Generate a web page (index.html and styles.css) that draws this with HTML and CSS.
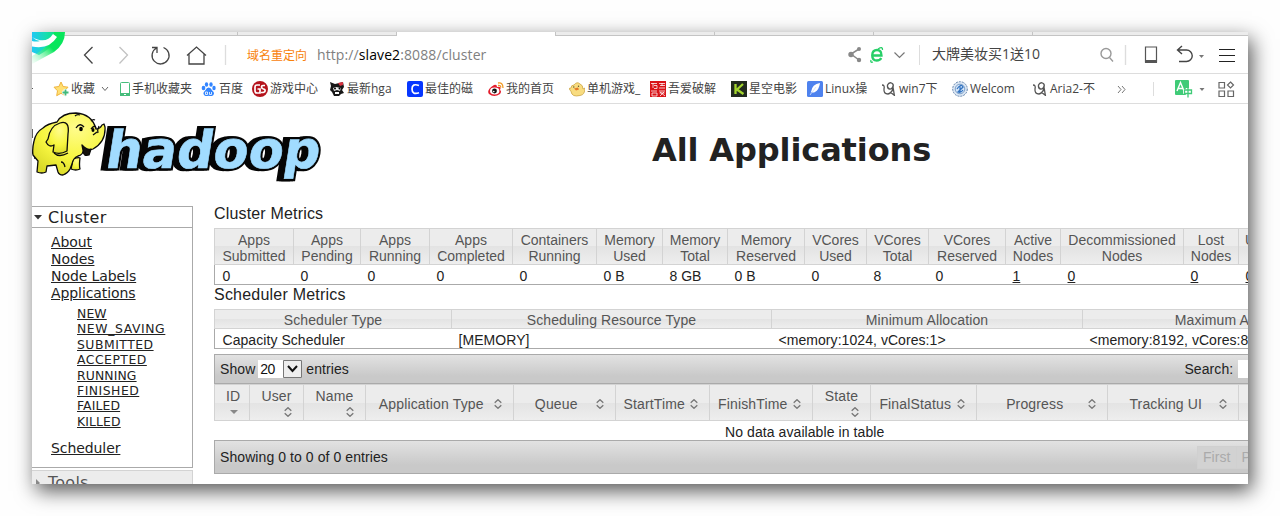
FILE: index.html
```html
<!DOCTYPE html>
<html lang="zh-CN">
<head>
<meta charset="utf-8">
<title>All Applications</title>
<link rel="stylesheet" href="styles.css">
</head>
<body>
<div class="window">
  <div class="tabs"><i></i><i></i><i class="active"></i><i></i><i></i><i></i><i></i></div>
  <svg class="brand" width="34" height="32" viewBox="0 0 34 32"><defs><linearGradient id="g1" x1="0" x2="1"><stop offset="0" stop-color="#21c8f5"/><stop offset=".5" stop-color="#18ddb0"/><stop offset="1" stop-color="#08e85e"/></linearGradient><linearGradient id="g2" x1="1" y1="0" x2="0" y2="1"><stop offset=".45" stop-color="#08e65c"/><stop offset="1" stop-color="#a8f8c8" stop-opacity=".1"/></linearGradient></defs><path d="M0 0H28Q25 13 7 23L0 20Z" fill="url(#g1)"/><path d="M22 0H33Q33 12 22 20Q11 26 0 32V24Q22 13 22 0Z" fill="url(#g2)"/><path d="M0 5Q14 13 21 2L25 5Q17 18 0 14.500V9Q4 10 8 9Q3 8 0 5Z" fill="#fff"/></svg>
  <div class="address">
    <svg class="nav" width="160" height="24" viewBox="0 0 160 24" fill="none" stroke="#444" stroke-width="1.3"><path d="M12.500 4 4.500 12l8 8.500"/><path d="M39.500 4l8 8-8 8.500" stroke="#c2c2c2"/><path d="M83.500 4.500a8.500 8.500 0 1 1-7 .5M72 4.500h5v5.500"/><path d="M107 12.500 116.500 4l9.500 8.500M109 11v10h15V11"/><path d="M145.500 2v20" stroke="#ddd"/></svg>
    <span class="redirect">域名重定向</span>
    <span class="url">http://<b>slave2</b>:8088/cluster</span>
    <svg class="page-tools" width="75" height="24" viewBox="0 0 75 24" fill="none"><path d="M13 6 5 11l8 6" stroke="#888" stroke-width="1.5"/><g fill="#888"><circle cx="13" cy="6" r="2"/><circle cx="5" cy="11.500" r="2.700"/><circle cx="13" cy="17" r="2.200"/></g><path d="M26 12.500h9.500q0-5.500-4.500-5.500t-4.800 5.200q0 5.300 4.500 5.300 3.300 0 4.500-2.500" stroke="#27cf68" stroke-width="2.300"/><path d="M25 17q-1 3 2 2m5-13q5-3 4.500 1" stroke="#27cf68" stroke-width="1.300"/><path d="m48.500 9.500 5 5 5-5" stroke="#777" stroke-width="1.200"/><path d="M73.500 2v20" stroke="#ddd"/></svg>
    <span class="query">大牌美妆买1送10</span>
    <svg class="window-tools" width="140" height="24" viewBox="0 0 140 24" fill="none" stroke="#444" stroke-width="1.400"><g stroke="#999"><circle cx="8" cy="10.500" r="5"/><path d="m11.500 14.500 3.500 4"/></g><path d="M27.500 2v20" stroke="#ddd"/><path d="M47.500 4h11v15h-11z" stroke="#555" stroke-width="1.200"/><path d="M47 17h12v3H47z" fill="#555" stroke="none"/><path d="M84 3l-4.500 4 4.500 4M80 7h8.500a5.500 5.500 0 0 1 0 11.500h-7.500"/><path d="M101 12h5l-2.500 3z" fill="#777" stroke="none"/><path d="M121 6.500h16M121 12.500h16M121 18.500h16" stroke="#222" stroke-width="1"/></svg>
  </div>
  <div class="bookmarks">
    <span class="tick"></span>
    <span class="bm"><svg viewBox="0 0 16 16"><path d="m8 1 2.100 4.500 4.900.7-3.500 3.600.8 4.900L8 12.300l-4.300 2.400.8-4.900L1 6.200l4.900-.7z" fill="#ffe073" stroke="#efb43e"/><path d="M12.500 8v7M9 11.500h7" stroke="#fff" stroke-width="3.500"/><path d="M12.500 8.500v6M9.500 11.500h6" stroke="#42b97b" stroke-width="1.800"/></svg>收藏<svg class="chev" viewBox="0 0 8 8"><path d="m1 2 3 3.500L7 2" fill="none" stroke="#666"/></svg></span>
    <span class="bm phone"><svg viewBox="0 0 12 16"><rect x="1.500" y="1.500" width="9" height="13" rx="1" fill="#fff" stroke="#46bd7c"/><path d="M1 12h10v3H1z" fill="#46bd7c"/><path d="M5 13.500h2" stroke="#fff"/></svg>手机收藏夹</span>
    <span class="bm"><svg viewBox="0 0 16 16" fill="#3385ff"><ellipse cx="2.500" cy="7" rx="1.800" ry="2.300"/><ellipse cx="5.500" cy="3.500" rx="1.700" ry="2.300"/><ellipse cx="10" cy="3.500" rx="1.700" ry="2.300"/><ellipse cx="13" cy="7" rx="1.700" ry="2.300"/><path d="M7.700 6.500q2 0 3.500 3 3 2.500 1 4.700-2 1.500-4.500.5-2.500 1-4.500-.5-2-2.200 1-4.700 1.500-3 3.500-3z"/><path d="M4.500 11h2v2.500h-2zM8.500 11v2.500h2V11" fill="none" stroke="#fff" stroke-width=".8"/></svg>百度</span>
    <span class="bm"><svg viewBox="0 0 16 16"><circle cx="8" cy="8" r="8" fill="#b5131c"/><path d="M8 4H5Q3 4 3 6v4q0 2 2 2h3V8H5.500M13 4.500h-2Q9.500 4.500 9.500 6t2 2q2 .3 1.500 2.200-.3 1.500-4 1.300" fill="none" stroke="#fff" stroke-width="1.700"/></svg>游戏中心</span>
    <span class="bm"><svg viewBox="0 0 16 16"><path d="M1 1l5 2 4-1 4-1 1 5-2 3 2 3-3 1-2 2H5l-2-4-2-2 1-4z" fill="#171717"/><path d="M4 7l3-1 5 1-1 3-3-1-3 1z" fill="#eee"/><path d="M9 2l5-1v3l-3 1z" fill="#d83240"/><circle cx="6" cy="7.500" r="1"/><circle cx="10.500" cy="7.500" r="1"/><path d="M6 12h4" stroke="#fff" stroke-width="2"/></svg>最新hga</span>
    <span class="bm"><svg viewBox="0 0 16 16"><rect width="16" height="16" rx="2" fill="#0737ff"/><path d="M12 4.500q-7-2.500-7 3.500t7 3.700" fill="none" stroke="#fff" stroke-width="1.700"/></svg>最佳的磁</span>
    <span class="bm"><svg viewBox="0 0 16 16"><path d="M6 4q3-1 3 2 5-1 3 3 2 1 0 4-6 4-11 0-3-4 5-9z" fill="#e41d2c"/><ellipse cx="6.700" cy="10" rx="4.700" ry="3.400" fill="#fff"/><circle cx="6.500" cy="10" r="2.400" fill="#111"/><circle cx="5.800" cy="10.600" r=".8" fill="#fff"/><path d="M10 2q5-1 5 5M10 4.500q3-.5 2.700 2" fill="none" stroke="#f29b24" stroke-width="1.300"/></svg>我的首页</span>
    <span class="bm"><svg viewBox="0 0 16 16"><path d="M2 7q0-3 3-3 3-4 6-1 3 1 3 5l2-1q0 7-5 7.500-8 2-9-4L0 7.500z" fill="#f8dc80" stroke="#c69e3a" stroke-width=".7"/><path d="m5 7.500 4-1 1 2-3 1z" fill="#e27a28"/><circle cx="4.800" cy="6" r=".7" fill="#553"/><circle cx="9.500" cy="5.200" r=".7" fill="#553"/></svg>单机游戏_</span>
    <span class="bm"><svg viewBox="0 0 16 16"><path fill="#d91418" d="M0 0h16v16H0z"/><path d="M1 2.500h6M3 2v5M4 4.500h3v3H4M9 2.500h6M10 4.500h5M9 7h6M12 2v3M1 10h6M2 12h5v3H2zM9 10h6M9.500 12h5M10 15l4-4M10 11l5 4" fill="none" stroke="#fff" stroke-width=".75"/></svg>吾爱破解</span>
    <span class="bm"><svg viewBox="0 0 16 16"><path fill="#222b1e" d="M0 0h16v16H0z"/><path d="M4.500 3v10M12 3l-6 5.500 6.500 4.500" fill="none" stroke="#a3d52d" stroke-width="2.300"/></svg>星空电影</span>
    <span class="bm"><svg viewBox="0 0 16 16"><rect width="16" height="16" rx="1.500" fill="#4e82ee"/><path d="M4 11Q5 3 13 2q-1 7-5 9-2 1-4 0-.5 1-1 3 0-2 1-3z" fill="#fff"/><path d="m3 14 6-8" stroke="#cbdcff" stroke-width=".8"/></svg>Linux操</span>
    <span class="bm"><svg viewBox="0 0 16 16" fill="none" stroke="#555" stroke-width="1.300"><path d="M1 4q3 0 2 4-.5 5 4 5 4-1 5-6M12 5.500q-1 3-3.500 2.500T6.500 4Q8 1 10.500 2T12 6l1.500 9M9 11l4 3"/></svg>win7下</span>
    <span class="bm"><svg viewBox="0 0 16 16"><circle cx="8" cy="8" r="7.300" fill="#dce7f4" stroke="#6283ab" stroke-dasharray="2 1"/><circle cx="8" cy="8" r="4.800" fill="#d5e6fa" stroke="#7c9fc7"/><path d="M5 8q4-6 6-2L6 11q3 1 5-2M8 5v6" fill="none" stroke="#3575c1" stroke-width="1.300"/></svg>Welcom</span>
    <span class="bm"><svg viewBox="0 0 16 16" fill="none" stroke="#555" stroke-width="1.300"><path d="M1 4q3 0 2 4-.5 5 4 5 4-1 5-6M12 5.500q-1 3-3.500 2.500T6.500 4Q8 1 10.500 2T12 6l1.500 9M9 11l4 3"/></svg>Aria2-不</span>
    <svg class="more" width="120" height="20" viewBox="0 0 120 20" fill="none" stroke="#777"><path d="m1 7 3 3.500L1 14M5 7l3 3.500L5 14"/><path d="M36.500 3v14" stroke="#ddd"/><rect x="58" y="1" width="14" height="15" rx="1" fill="#3fcb77" stroke="none"/><path d="m60 12 3.500-8.500L67 12M61.500 9.500h4" stroke="#fff" stroke-width="1.400"/><path d="M71 9v10M66 12.500h10" stroke="#fff" stroke-width="4.500"/><path d="M71 9v9.500M67.500 11h7v3.500h-7z" stroke="#3fcb77" stroke-width="1.300"/><path d="M82.500 9h5L85 12z" fill="#777" stroke="none"/><g stroke="#666" stroke-width="1.200"><path d="M102 3.500h5.500V9H102zM102 12h5.500v5.500H102zM111 12h5.500v5.500H111zM113.500 3l3 3-3 3-3-3z"/></g></svg>
  </div>

  <header class="masthead">
    <svg class="logo" width="300" height="90" viewBox="0 0 300 90">
      <defs><radialGradient id="skin" cx=".6" cy=".25" r=".8"><stop offset="0" stop-color="#fffc8c"/><stop offset=".6" stop-color="#f7f640"/><stop offset="1" stop-color="#d9d928"/></radialGradient></defs>
      <g transform="translate(0 -2)">
        <g fill="url(#skin)" stroke="#0b0b0b" stroke-width="1.300" stroke-linejoin="round">
          <path d="M0 27v9M0 50q3 3 3 7" fill="none"/>
          <path d="M41 57q6-2 7-1-1 7 0 11-4 2-9 0z"/>
          <path d="M2 39q2-9 9-13 4-4 14-6 5-9 19-9 16 1 20 16 4 0 6-4l2-1 1 3q1 15-12 22-5 2-9 0-1 6-6 7-5 2-6 8l-2 5q-2 4-7 6-4 0-5-3l-2-7-9 1-1 6q-4 2-9 0l1-11-5-6Q0 47 2 39z"/>
          <path d="M16 37q2-13 12-16 10-3 8 11l-1 17q-7 4-14 1l1-7q-5 3-8-3z"/>
          <path d="M43 14q2-2 5-1M59 19q2-2 4-1M44 26q4-6 8-1M59 27q4-5 5-1M61 33l4-3M67 24q-2 4-1 7" fill="none"/>
          <path d="M50 43q6 6 9 4l-2 6q-6 2-6-5z" fill="#16130d"/><path d="M22 51q5 5 14 0M29 60q3 0 4 5" fill="none"/>
        </g>
        <ellipse cx="49" cy="27" rx="1.800" ry="2.300"/><ellipse cx="61" cy="28" rx="1.500" ry="2"/>
      </g>
      <g class="wordmark" transform="translate(72 63.500) skewX(-9)" stroke-linejoin="miter">
        <text x="-5" y="0" textLength="214" lengthAdjust="spacingAndGlyphs" stroke="#050505" stroke-width="5">hadoop</text>
        <text x="-2" y="0" textLength="214" lengthAdjust="spacingAndGlyphs" stroke="#050505" stroke-width="5">hadoop</text>
        <text x="0" y="0" textLength="214" lengthAdjust="spacingAndGlyphs" stroke="#050505" stroke-width="5">hadoop</text>
        <text x="0" y="0" textLength="214" lengthAdjust="spacingAndGlyphs" fill="#a1dcff" stroke="#a1dcff" stroke-width=".6">hadoop</text>
      </g>
    </svg>
    <h1>All Applications</h1>
  </header>

  <div class="body">
    <nav class="side">
      <section class="open">
        <h3><svg width="8" height="5" viewBox="0 0 8 5"><path d="M0 0h8L4 4.500z" fill="#333"/></svg>Cluster</h3>
        <ul class="links">
          <li><a>About</a></li><li><a>Nodes</a></li><li><a>Node Labels</a></li><li><a>Applications</a>
            <ul class="states"><li><a>NEW</a></li><li><a class="wide">NEW_SAVING</a></li><li><a class="mid">SUBMITTED</a></li><li><a class="mid">ACCEPTED</a></li><li><a>RUNNING</a></li><li><a class="mid">FINISHED</a></li><li><a>FAILED</a></li><li><a>KILLED</a></li></ul>
          </li>
          <li><a>Scheduler</a></li>
        </ul>
      </section>
      <section class="closed"><h3><svg width="8" height="8" viewBox="0 0 8 8"><path d="M2 0v8l4-4z" fill="#888"/></svg>Tools</h3></section>
    </nav>
    <main>
      <h2>Cluster Metrics</h2>
      <div class="grid metrics">
        <div class="th">Apps<br>Submitted</div><div class="th">Apps<br>Pending</div><div class="th">Apps<br>Running</div><div class="th">Apps<br>Completed</div><div class="th">Containers<br>Running</div><div class="th">Memory<br>Used</div><div class="th">Memory<br>Total</div><div class="th">Memory<br>Reserved</div><div class="th">VCores<br>Used</div><div class="th">VCores<br>Total</div><div class="th">VCores<br>Reserved</div><div class="th">Active<br>Nodes</div><div class="th">Decommissioned<br>Nodes</div><div class="th">Lost<br>Nodes</div><div class="th">Unhealthy<br>Nodes</div>
        <div class="td">0</div><div class="td">0</div><div class="td">0</div><div class="td">0</div><div class="td">0</div><div class="td">0 B</div><div class="td">8 GB</div><div class="td">0 B</div><div class="td">0</div><div class="td">8</div><div class="td">0</div><div class="td"><a>1</a></div><div class="td"><a>0</a></div><div class="td"><a>0</a></div><div class="td"><a>0</a></div>
      </div>
      <h2 class="second">Scheduler Metrics</h2>
      <div class="grid scheduler">
        <div class="th">Scheduler Type</div><div class="th">Scheduling Resource Type</div><div class="th">Minimum Allocation</div><div class="th">Maximum Allocation</div>
        <div class="td">Capacity Scheduler</div><div class="td">[MEMORY]</div><div class="td">&lt;memory:1024, vCores:1&gt;</div><div class="td">&lt;memory:8192, vCores:8&gt;</div>
      </div>
      <div class="bar top"><span>Show</span><span class="select">20<svg width="19" height="18" viewBox="0 0 19 18"><path d="M.5.5h18v17H.5z" fill="#eee" stroke="#777"/><path d="m5 6 4.500 5L14 6" fill="none" stroke="#111" stroke-width="2"/></svg></span><span>entries</span><span class="search">Search:</span><span class="field"></span></div>
      <svg class="defs" width="0" height="0"><symbol id="sort" viewBox="0 0 8 10"><path d="M.7 3.800 4 .7l3.300 3.100M.7 6.200 4 9.300l3.300-3.100" fill="none" stroke="#777" stroke-width="1.300"/></symbol></svg>
      <div class="grid apps">
        <div class="th stack"><span>ID</span><svg viewBox="0 0 8 10"><path d="M0 3h8L4 7z" fill="#888"/></svg></div><div class="th stack"><span>User</span><svg><use href="#sort"/></svg></div><div class="th stack"><span>Name</span><svg><use href="#sort"/></svg></div><div class="th"><span>Application Type</span><svg><use href="#sort"/></svg></div><div class="th"><span>Queue</span><svg><use href="#sort"/></svg></div><div class="th"><span>StartTime</span><svg><use href="#sort"/></svg></div><div class="th"><span>FinishTime</span><svg><use href="#sort"/></svg></div><div class="th stack"><span>State</span><svg><use href="#sort"/></svg></div><div class="th"><span>FinalStatus</span><svg><use href="#sort"/></svg></div><div class="th"><span>Progress</span><svg><use href="#sort"/></svg></div><div class="th"><span>Tracking UI</span><svg><use href="#sort"/></svg></div><div class="th"></div>
      </div>
      <div class="empty">No data available in table</div>
      <div class="bar bottom"><span>Showing 0 to 0 of 0 entries</span><span class="pager"><i>First</i><i>Previous</i></span></div>
    </main>
  </div>
</div>
</body>
</html>
```
FILE: styles.css
```css
* { box-sizing: border-box; }
body { margin: 0; padding: 32px; height: 516px; overflow: hidden; background: #fefefe; font-family: "Liberation Sans", Arial, sans-serif; font-size: 14px; color: #222; }
.window { position: relative; width: 1216px; height: 452px; overflow: hidden; background: #fff; box-shadow: 4px 7px 19px rgba(0,0,0,.66); }
h1, h2, h3, ul { margin: 0; padding: 0; font-weight: normal; list-style: none; }
svg { display: block; flex: none; }
a { text-decoration: underline; }

.tabs { display: grid; grid-template-columns: 206px 159px 159px 159px 159px 159px 1fr; height: 4px; }
.tabs i { background: #ececec; border-right: 1px solid #c4c4c4; border-bottom: 1px solid #c4c4c4; }
.tabs i:last-child { border-right: 0; }
.tabs .active { background: #fff; border-bottom: 0; }
.brand { position: absolute; left: 0; top: 0; }
.address { display: flex; align-items: center; height: 38px; padding-left: 48px; border-bottom: 1px solid #ddd; font-family: "Open Sans", "Noto Sans CJK SC", sans-serif; white-space: nowrap; }
.address svg { margin-top: 1px; }
.redirect { width: 62px; margin-left: 7px; margin-right: 8px; font-size: 12px; color: #f8820c; }
.url { width: 529px; font-size: 14px; letter-spacing: .1px; color: #808080; }
.url b { font-weight: normal; color: #000; }
.page-tools { margin-right: 11px; }
.query { width: 166px; padding-bottom: 3px; font-size: 14px; color: #444; }

.bookmarks { display: grid; grid-template-columns: 21px 66px 82px 51px 77px 78px 81px 81px 81px 81px 76px 75px 70px 81px 84px 120px; align-items: center; height: 30px; border-bottom: 1px solid #ddd; font: 12px "Open Sans", "Noto Sans CJK SC", sans-serif; color: #444; white-space: nowrap; }
.bm { display: flex; align-items: center; gap: 2px; height: 18px; line-height: 17px; }
.bm svg { width: 16px; height: 16px; }
.bm .chev { width: 8px; height: 8px; margin-left: 4px; }
.bm:nth-child(13), .bm:nth-child(15) { margin-left: -1px; }
.phone svg { width: 12px; }
.phone { gap: 1px; }
.tick { width: 1px; height: 1px; background: #555; }

.masthead { position: relative; height: 102px; }
.logo { position: absolute; left: 0; top: 0; }
.wordmark { font-family: "DejaVu Sans", sans-serif; font-weight: bold; font-size: 52px; }
.masthead h1 { padding: 26px 0 0 620px; font: bold 32px/40px "DejaVu Sans", Verdana, sans-serif; letter-spacing: -.12px; }

.body { display: flex; width: 1500px; }
.side { width: 161px; font-family: "DejaVu Sans", Verdana, sans-serif; }
.side h3 { display: flex; align-items: center; gap: 6px; height: 20px; padding-left: 2px; font-size: 16px; letter-spacing: .25px; }
.open { height: 262px; border: 1px solid #aaa; border-left: 0; }
.open h3 { border-bottom: 1px solid #aaa; height: 21px; }
.links { padding: 6px 0 0 19px; font-size: 14px; line-height: 17px; letter-spacing: -.08px; }
.states { padding: 4px 0 11px 26px; font-size: 12.4px; line-height: 15.4px; letter-spacing: .12px; }
.states .wide { letter-spacing: .6px; }
.states .mid { letter-spacing: .5px; }
.closed { margin-top: 2px; height: 30px; border: 1px solid #d3d3d3; border-left: 0; background: #ececec; color: #555; }
.closed h3 { height: 23px; }

main { width: 1310px; margin-left: 21px; }
h2 { height: 22px; font-size: 16px; line-height: 15px; letter-spacing: .17px; }
h2.second { height: 24px; line-height: 19px; letter-spacing: .22px; }
.grid { display: grid; width: 1310px; }
.th { background: linear-gradient(#ececec 50%, #e3e3e3 50%, #eee); border: 1px solid #d3d3d3; border-right: 0; text-align: center; color: #555; line-height: 16px; white-space: nowrap; }
.td { border-bottom: 1px solid #aaa; padding-left: 8px; white-space: nowrap; }
.td:nth-child(16), .scheduler .td:nth-child(5) { border-left: 1px solid #aaa; }
.metrics { grid-template-columns: 79px 67px 69px 83px 84px 66px 65px 77px 62px 62px 77px 55px 123px 55px 76px; grid-template-rows: 37px 20px; }
.metrics .th { padding-top: 3px; }
.metrics .td { line-height: 22px; padding-left: 7.5px; }
.scheduler { grid-template-columns: 237px 320px 311px 311px; grid-template-rows: 20px 20px; }
.scheduler .th { line-height: 20px; letter-spacing: .1px; }
.scheduler .td { line-height: 22px; letter-spacing: .06px; padding-left: 7.500px; }
.bar { display: flex; align-items: center; width: 1310px; border: 1px solid #aaa; background: linear-gradient(#e2e2e2, #c9c9c9 75%); padding-left: 5px; letter-spacing: .08px; }
.top { height: 30px; margin-top: 5px; }
.select { display: flex; align-items: center; justify-content: space-between; width: 44px; height: 18px; margin: 0 4px 0 3px; padding-left: 2px; background: #fff; color: #111; letter-spacing: -.7px; }
.search { margin-left: 835.500px; margin-right: 4.500px; }
.field { width: 120px; height: 18px; background: #fff; }
.defs { position: absolute; }
.apps { grid-template-columns: 35px 54px 62px 148px 102px 94px 103px 58px 106px 131px 131px 100px; grid-template-rows: 37px; letter-spacing: .15px; }
.apps .th { display: flex; align-items: center; padding: 3px 11.5px 0 3px; }
.apps .th > span { flex: 1; }
.apps svg { width: 8px; height: 10px; }
.apps .stack { display: block; padding: 3px 11px 0 11px; }
.apps .stack > span { display: block; }
.apps .stack svg { margin: 3px 0 0 auto; }
.apps .th:nth-child(10), .apps .th:nth-child(11) { padding-left: 5px; }
.empty { height: 19px; padding-left: 511px; line-height: 23px; letter-spacing: .08px; }
.bottom { height: 34px; }
.pager { display: flex; margin-left: 809px; color: #aaa; }
.pager i { padding: 3px 5px; border: 1px solid #d0d0d0; border-right: 0; background: #d2d2d2; font-style: normal; line-height: 15px; }
```
